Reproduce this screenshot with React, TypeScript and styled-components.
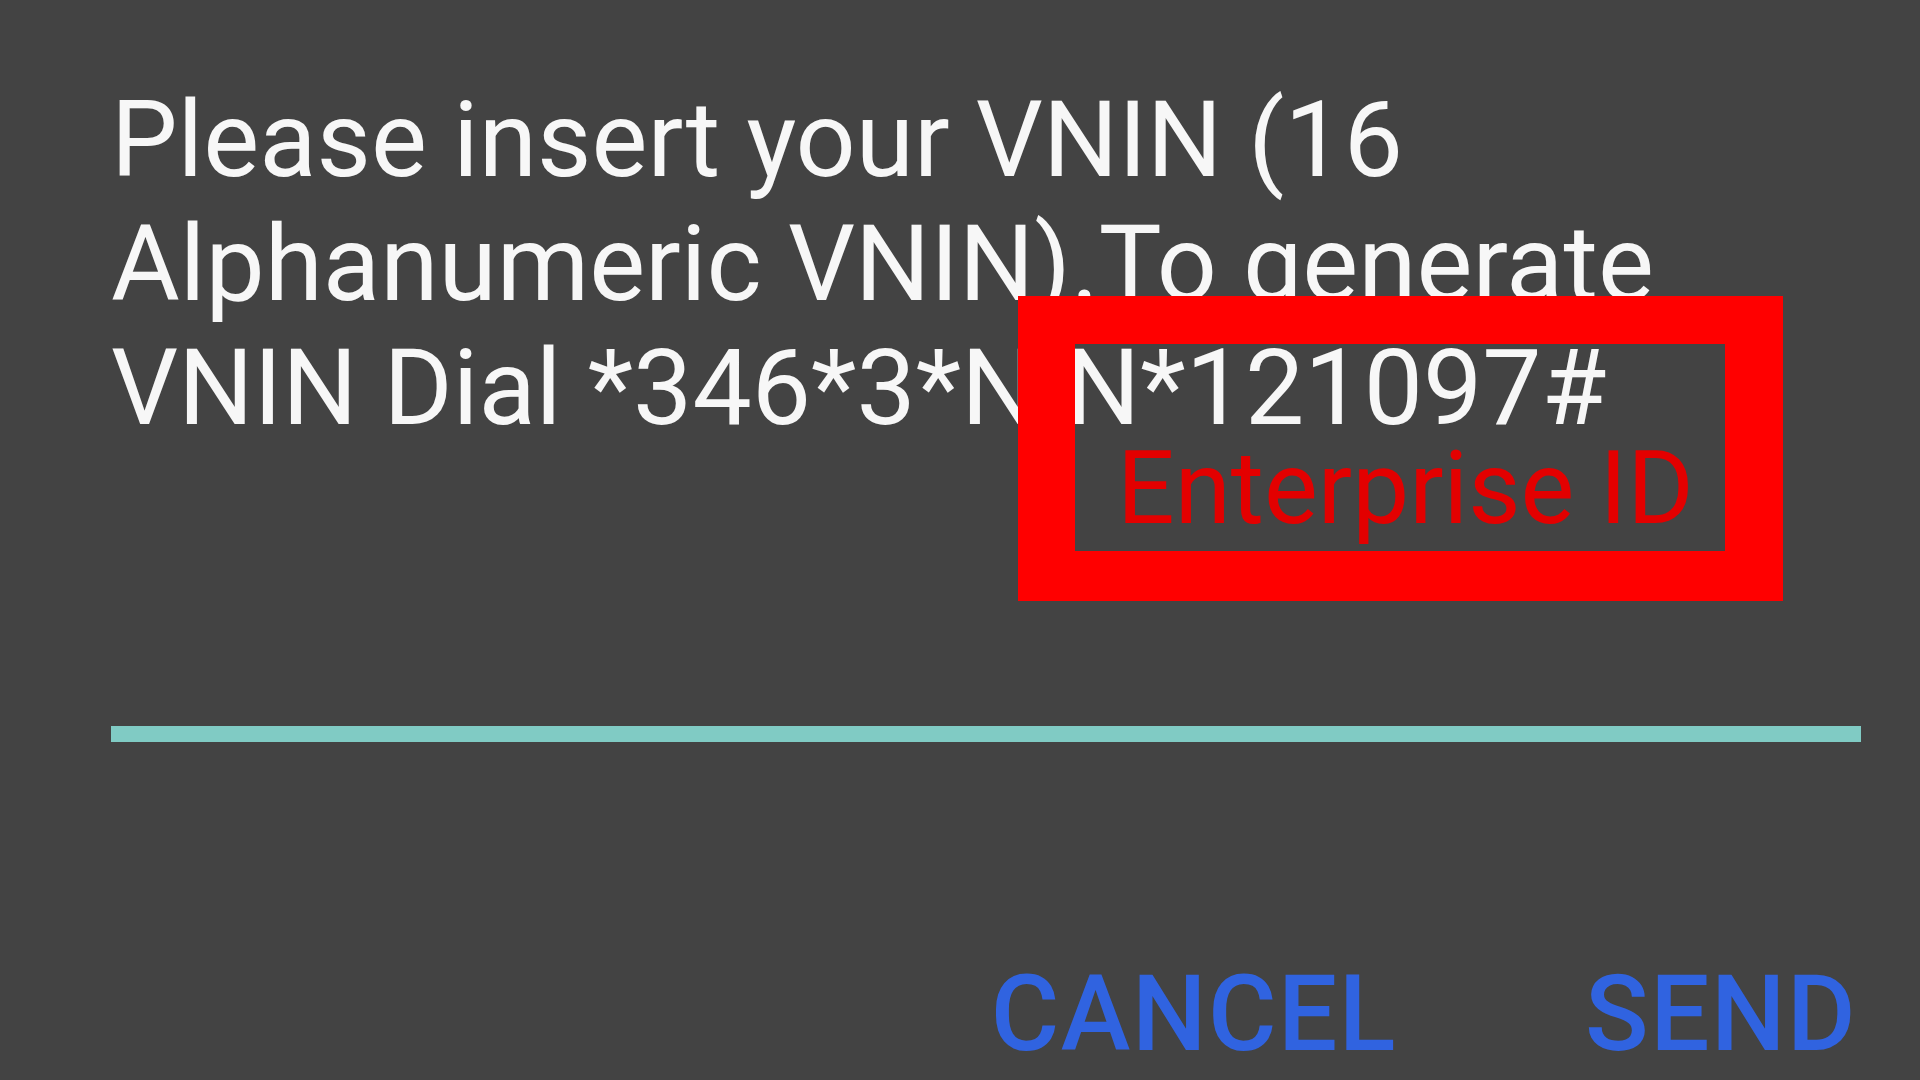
import styled, { createGlobalStyle } from 'styled-components';

const GlobalStyle = createGlobalStyle`
  html, body {
    margin: 0;
    padding: 0;
    background: #434343;
  }
  * {
    box-sizing: border-box;
  }
`;

const Dialog = styled.div`
  width: 1920px;
  height: 1080px;
  overflow: hidden;
  background: #434343;
  padding: 78px 63px 0 111px;
  display: flex;
  flex-direction: column;
  font-family: Roboto, 'Noto Sans', sans-serif;
`;

const Message = styled.p`
  position: relative;
  margin: 0;
  font-size: 105.5px;
  line-height: 124px;
  color: #f7f7f7;
  white-space: nowrap;
`;

// red annotation frame drawn over the dial code
const Highlight = styled.div`
  position: absolute;
  left: 907px;
  top: 218px;
  width: 765px;
  height: 305px;
  border-style: solid;
  border-color: #ff0000;
  border-width: 48px 58px 50px 57px;
  padding: 95px 0 0 42px;
`;

const HighlightLabel = styled.span`
  display: block;
  font-size: 101.5px;
  line-height: 100px;
  color: #e30000;
`;

const Field = styled.div`
  height: 292px;
  border-bottom: 16px solid #80cbc4;
  margin-right: -4px;
`;

const Actions = styled.div`
  display: flex;
  justify-content: flex-end;
  gap: 188px;
  margin-top: 211px;
`;

const ActionButton = styled.button`
  background: none;
  border: none;
  padding: 0;
  font-family: Roboto, 'Noto Sans', sans-serif;
  font-weight: 500;
  font-size: 105px;
  line-height: 124px;
  letter-spacing: 1.5px;
  color: #3063e0;
  text-transform: uppercase;
  cursor: pointer;
`;

interface IProps {
  enterpriseId?: string;
}

function App({ enterpriseId = '121097' }: IProps) {
  return (
    <>
      <GlobalStyle />
      <Dialog>
        <Message>
          Please insert your VNIN (16
          <br />
          Alphanumeric VNIN).To generate
          <br />
          VNIN Dial *346*3*NIN*{enterpriseId}#
          <Highlight>
            <HighlightLabel>Enterprise ID</HighlightLabel>
          </Highlight>
        </Message>
        <Field />
        <Actions>
          <ActionButton>Cancel</ActionButton>
          <ActionButton>Send</ActionButton>
        </Actions>
      </Dialog>
    </>
  );
}

export default App;
